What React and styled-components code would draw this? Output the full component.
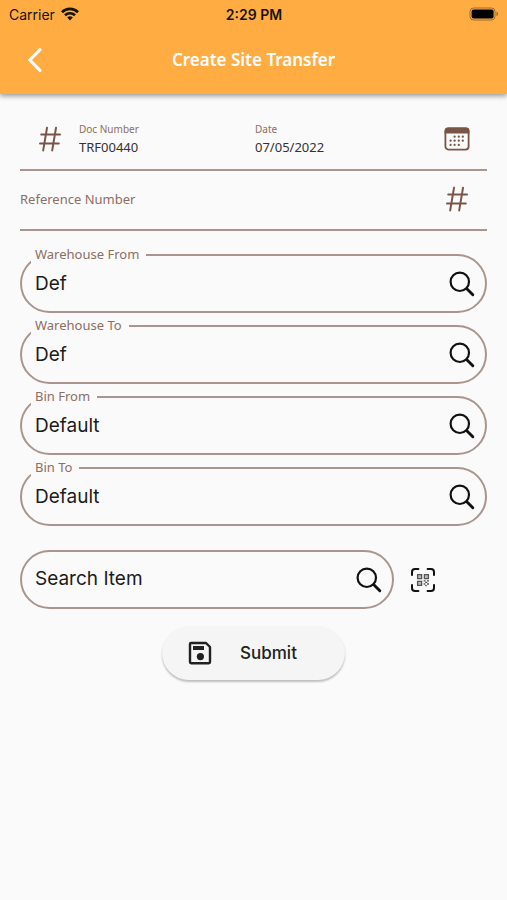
import styled, { createGlobalStyle, css } from "styled-components";

const GlobalStyle = createGlobalStyle`
  * {
    box-sizing: border-box;
  }

  body {
    margin: 0;
    background-color: #fafafa;
    font-family: Inter, "Liberation Sans", sans-serif;
    color: #1c1c1c;
  }
`;

const brown = "#795548";
const line = "#a9958d";
const labelFont = `"Noto Sans", "Open Sans", sans-serif`;

const Top = styled.div`
  background-color: #ffad42;
  box-shadow: 0 2px 5px rgba(0, 0, 0, 0.4);
`;

const StatusBar = styled.div`
  display: grid;
  grid-template-columns: 1fr auto 1fr;
  align-items: center;
  height: 28px;
  padding: 0 8px 0 9px;
  font-size: 14px;
  color: #17120a;
`;

const Carrier = styled.span`
  display: flex;
  align-items: center;
  gap: 6px;
`;

const Clock = styled.span`
  font-weight: 600;
`;

const Battery = styled.svg`
  justify-self: end;
`;

const Header = styled.header`
  display: grid;
  grid-template-columns: 48px 1fr 48px;
  align-items: center;
  height: 66px;
  padding: 0 11px 2px;
`;

const Title = styled.h1`
  margin: 0;
  font-family: ${labelFont};
  font-size: 17px;
  font-weight: 600;
  line-height: 24px;
  text-align: center;
  color: #fff;
`;

const IconButton = styled.button`
  display: flex;
  align-items: center;
  justify-content: center;
  flex: none;
  width: ${(props) => props.$size || 48}px;
  height: 48px;
  padding: 0;
  border: 0;
  background: none;
  color: ${(props) => props.$color || "#111"};
`;

const Form = styled.form`
  padding: 16px 20px;
`;

const inputReset = css`
  width: 100%;
  min-width: 0;
  padding: 0;
  border: 0;
  outline: 0;
  background: none;
`;

const Row = styled.div`
  display: flex;
  align-items: center;
  height: ${(props) => props.$height}px;
  padding: 0 4px 2px 0;
  border-bottom: 2px solid ${line};
  color: ${brown};
`;

const HashBox = styled.span`
  display: flex;
  justify-content: center;
  flex: none;
  width: 59px;
`;

const Info = styled.div`
  flex: 1;
  min-width: 0;
`;

const InfoLabel = styled.label`
  display: block;
  font-family: ${labelFont};
  font-size: 10px;
  line-height: 16px;
  color: #8d6e63;
`;

const InfoInput = styled.input`
  ${inputReset}
  display: block;
  height: 20px;
  font-family: ${labelFont};
  font-size: 13px;
  color: #333;
`;

const ReferenceInput = styled.input`
  ${inputReset}
  flex: 1;
  height: 40px;
  font-family: ${labelFont};
  font-size: 13px;
  color: #333;

  &::placeholder {
    color: #8d6e63;
    opacity: 1;
  }
`;

const Fields = styled.div`
  display: flex;
  flex-direction: column;
  gap: 4px;
  margin: 15px 0 24px;
`;

const Outline = styled.fieldset`
  height: 67px;
  min-width: 0;
  margin: 0;
  padding: 0 1px 0 9px;
  border: 2px solid ${line};
  border-radius: 30px;
`;

const Legend = styled.legend`
  height: 18px;
  padding: 0 7px 0 4px;
  font-family: ${labelFont};
  font-size: 13px;
  line-height: 16px;
  color: #8d6e63;
`;

const FieldBody = styled.div`
  display: flex;
  align-items: center;
  height: 40px;
  padding-left: 4px;
`;

const FieldInput = styled.input`
  ${inputReset}
  flex: 1;
  height: 40px;
  padding-bottom: 2px;
  font-family: inherit;
  font-size: 19px;
  color: #1c1c1c;

  &::placeholder {
    color: #1c1c1c;
    opacity: 1;
  }
`;

const SearchRow = styled.div`
  display: flex;
  align-items: center;
  gap: 5px;
  padding-right: 40px;
`;

const SearchBox = styled.div`
  display: flex;
  align-items: center;
  flex: 1;
  min-width: 0;
  height: 59px;
  padding: 0 1px 0 13px;
  border: 2px solid ${line};
  border-radius: 30px;
`;

const Submit = styled.button`
  display: flex;
  align-items: center;
  gap: 28px;
  height: 54px;
  margin: 17px auto 0;
  padding: 0 48px 0 26px;
  border: 0;
  border-radius: 27px;
  background-color: #f5f5f5;
  box-shadow: 0 2px 2px rgba(0, 0, 0, 0.24);
  font-family: inherit;
  font-size: 17px;
  font-weight: 500;
  color: #212121;
`;

const WifiIcon = () => (
  <svg width="18" height="14" viewBox="0 0 18 14" fill="none" stroke="currentColor" strokeWidth="2.6">
    <path d="M1 5.2a11.4 11.4 0 0 1 16 0" />
    <path d="M4 8.3a7.2 7.2 0 0 1 10 0" />
    <path d="M6.2 10.6a4 4 0 0 1 5.6 0L9 13.6z" fill="currentColor" stroke="none" />
  </svg>
);

const BatteryIcon = () => (
  <Battery width="30" height="14" viewBox="0 0 30 14">
    <rect x="1" y="1" width="25" height="12" rx="3.6" fill="none" stroke="#9b6a2b" />
    <rect x="2.6" y="2.6" width="22" height="9" rx="2" fill="#000" />
    <path d="M27.5 4.8c2 .6 2 3.8 0 4.4z" fill="#9b6a2b" />
  </Battery>
);

const BackIcon = () => (
  <svg width="18" height="26" viewBox="0 0 18 26" fill="none" stroke="currentColor" strokeWidth="3.2" strokeLinecap="round" strokeLinejoin="round">
    <path d="M14 2.6 3.8 13 14 23.4" />
  </svg>
);

const HashIcon = () => (
  <svg width="22" height="26" viewBox="0 0 22 26" fill="none" stroke="currentColor" strokeWidth="2" strokeLinecap="round">
    <path d="M2.2 8.6H21M1 17.6h18.8M8 1.8 4.2 24.4M17 1.8l-3.8 22.6" />
  </svg>
);

const CalendarIcon = () => (
  <svg width="26" height="24" viewBox="0 0 26 24">
    <rect x="1.4" y="1.4" width="23.2" height="21.2" rx="3" fill="none" stroke="currentColor" strokeWidth="1.8" />
    <path d="M.6 6.4V4A3.4 3.4 0 0 1 4 .6h18A3.4 3.4 0 0 1 25.4 4v2.4z" fill="currentColor" />
    <g fill="currentColor">
      {[9.6, 13.6, 17.8].map((y, row) =>
        [6.6, 10.6, 14.8, 18.8]
          .filter((x, col) => !(row === 0 && col === 0) && !(row === 2 && col === 3))
          .map((x) => <rect key={`${x}-${y}`} x={x - 1.1} y={y - 1.1} width="2.2" height="2.2" rx="1" />)
      )}
    </g>
  </svg>
);

const SearchIcon = () => (
  <svg width="26" height="26" viewBox="0 0 26 26" fill="none" stroke="currentColor" strokeLinecap="round">
    <circle cx="10.8" cy="10.8" r="9.2" strokeWidth="2.2" />
    <path d="m17.8 17.8 6 6" strokeWidth="2.9" />
  </svg>
);

const QrIcon = () => (
  <svg width="24" height="24" viewBox="0 0 24 24" fill="none" stroke="currentColor">
    <path
      d="M1 7V4a3 3 0 0 1 3-3h3.4M16.6 1H20a3 3 0 0 1 3 3v3M23 17v3a3 3 0 0 1-3 3h-3.4M7.4 23H4a3 3 0 0 1-3-3v-3"
      strokeWidth="2"
      strokeLinecap="round"
    />
    <g stroke="#555" strokeWidth="1.3">
      <path d="M6.6 6.6h4v4h-4zM13.4 6.6h4v4h-4zM6.6 13.4h4v4h-4z" fill="#bbb" />
      <path d="M12.6 12.8h2M16 12.8h2M14.2 14.4h2M12.6 16h1.8M16 16h2M14.2 17.6h1.6" />
    </g>
  </svg>
);

const SaveIcon = () => (
  <svg width="24" height="24" viewBox="0 0 24 24" fill="none" stroke="currentColor" strokeWidth="2.4" strokeLinejoin="round">
    <path d="M3 2h15l4 4v15a1.2 1.2 0 0 1-1.2 1.2H3.2A1.2 1.2 0 0 1 2 21V3a1 1 0 0 1 1-1z" />
    <path d="M5 5h11v4H5z" fill="currentColor" stroke="none" />
    <circle cx="12.4" cy="15.6" r="3.6" fill="currentColor" stroke="none" />
  </svg>
);

const fields = [
  { id: "warehouse-from", label: "Warehouse From", value: "Def" },
  { id: "warehouse-to", label: "Warehouse To", value: "Def" },
  { id: "bin-from", label: "Bin From", value: "Default" },
  { id: "bin-to", label: "Bin To", value: "Default" },
];

const OutlinedField = ({ id, label, value }) => (
  <Outline>
    <Legend>
      <label htmlFor={id}>{label}</label>
    </Legend>
    <FieldBody>
      <FieldInput id={id} defaultValue={value} />
      <IconButton type="button" aria-label={`Find ${label}`} $size={44}>
        <SearchIcon />
      </IconButton>
    </FieldBody>
  </Outline>
);

const App = () => {
  return (
    <>
      <GlobalStyle />
      <Top>
        <StatusBar>
          <Carrier>
            Carrier
            <WifiIcon />
          </Carrier>
          <Clock>2:29 PM</Clock>
          <BatteryIcon />
        </StatusBar>
        <Header>
          <IconButton type="button" aria-label="Back" $color="#fff">
            <BackIcon />
          </IconButton>
          <Title>Create Site Transfer</Title>
        </Header>
      </Top>
      <Form onSubmit={(e) => e.preventDefault()}>
        <Row $height={61}>
          <HashBox>
            <HashIcon />
          </HashBox>
          <Info>
            <InfoLabel htmlFor="doc-number">Doc Number</InfoLabel>
            <InfoInput id="doc-number" defaultValue="TRF00440" readOnly />
          </Info>
          <Info>
            <InfoLabel htmlFor="date">Date</InfoLabel>
            <InfoInput id="date" defaultValue="07/05/2022" />
          </Info>
          <IconButton type="button" aria-label="Pick date" $size={52} $color={brown}>
            <CalendarIcon />
          </IconButton>
        </Row>
        <Row $height={60}>
          <ReferenceInput placeholder="Reference Number" aria-label="Reference Number" />
          <IconButton type="button" aria-label="Generate number" $size={52} $color={brown}>
            <HashIcon />
          </IconButton>
        </Row>
        <Fields>
          {fields.map((field) => (
            <OutlinedField key={field.id} {...field} />
          ))}
        </Fields>
        <SearchRow>
          <SearchBox>
            <FieldInput placeholder="Search Item" aria-label="Search Item" />
            <IconButton type="button" aria-label="Search" $size={44}>
              <SearchIcon />
            </IconButton>
          </SearchBox>
          <IconButton type="button" aria-label="Scan code">
            <QrIcon />
          </IconButton>
        </SearchRow>
        <Submit type="submit">
          <SaveIcon />
          Submit
        </Submit>
      </Form>
    </>
  );
};

export default App;
